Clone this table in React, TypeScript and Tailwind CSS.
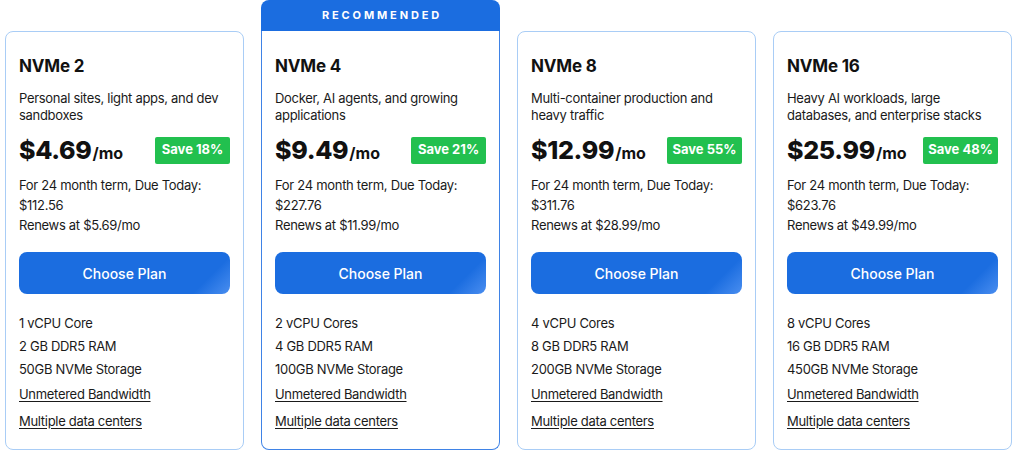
import React from 'react'

const plans = [
  {
    name: 'NVMe 2',
    desc: 'Personal sites, light apps, and dev sandboxes',
    price: '$4.69',
    save: 'Save 18%',
    due: '$112.56',
    renew: 'Renews at $5.69/mo',
    specs: ['1 vCPU Core', '2 GB DDR5 RAM', '50GB NVMe Storage'],
    recommended: false,
  },
  {
    name: 'NVMe 4',
    desc: 'Docker, AI agents, and growing applications',
    price: '$9.49',
    save: 'Save 21%',
    due: '$227.76',
    renew: 'Renews at $11.99/mo',
    specs: ['2 vCPU Cores', '4 GB DDR5 RAM', '100GB NVMe Storage'],
    recommended: true,
  },
  {
    name: 'NVMe 8',
    desc: 'Multi-container production and heavy traffic',
    price: '$12.99',
    save: 'Save 55%',
    due: '$311.76',
    renew: 'Renews at $28.99/mo',
    specs: ['4 vCPU Cores', '8 GB DDR5 RAM', '200GB NVMe Storage'],
    recommended: false,
  },
  {
    name: 'NVMe 16',
    desc: 'Heavy AI workloads, large databases, and enterprise stacks',
    price: '$25.99',
    save: 'Save 48%',
    due: '$623.76',
    renew: 'Renews at $49.99/mo',
    specs: ['8 vCPU Cores', '16 GB DDR5 RAM', '450GB NVMe Storage'],
    recommended: false,
  },
]

type Plan = (typeof plans)[number]

function PlanCard({ plan }: { plan: Plan }) {
  return (
    <div className="flex w-[239px] shrink-0 flex-col">
      {plan.recommended ? (
        <div className="flex h-[31px] items-center justify-center rounded-t-lg bg-[#1b6de0] pl-[3px] text-[11px] font-bold tracking-[0.26em] text-white">
          RECOMMENDED
        </div>
      ) : (
        <div className="h-[31px]" />
      )}
      <div
        className={
          plan.recommended
            ? 'flex flex-1 flex-col rounded-b-lg border border-t-0 border-[#3f83e6] bg-white px-[13px] pt-[21px]'
            : 'flex flex-1 flex-col rounded-lg border border-[#a9cdf6] bg-white px-[13px] pt-[20px]'
        }
      >
        <h2 className="text-[17px] leading-[28px] font-bold tracking-[-0.2px] text-[#111]">{plan.name}</h2>
        <p className="mt-[10px] text-[13px] leading-[17px] tracking-[-0.3px] text-[#1a1a1a]">{plan.desc}</p>

        {/* price row */}
        <div className="mt-[8px] flex items-center justify-between">
          <div className="flex items-baseline">
            <span className="text-[25px] leading-[36px] font-extrabold tracking-[-0.3px] text-[#111]">{plan.price}</span>
            <span className="ml-[1px] text-[16px] font-bold text-[#111]">/mo</span>
          </div>
          <span className="flex h-[27px] w-[75px] items-center justify-center rounded-[2px] bg-[#22c04f] text-[13px] font-bold text-white">
            {plan.save}
          </span>
        </div>

        <div className="mt-[7px] text-[13px] leading-[20px] tracking-[-0.3px] text-[#1a1a1a]">
          <p>For 24 month term, Due Today:</p>
          <p>{plan.due}</p>
          <p>{plan.renew}</p>
        </div>

        <button className="mt-[17px] h-[42px] w-full rounded-lg bg-[linear-gradient(135deg,#1b6de0_0%,#1b6de0_85%,#4a8ef0_100%)] text-[14px] font-medium text-white">
          Choose Plan
        </button>

        <ul className="mt-[18px] text-[13px] leading-[23px] tracking-[-0.3px] text-[#1a1a1a]">
          {plan.specs.map((s) => (
            <li key={s}>{s}</li>
          ))}
          <li className="mt-[2px] underline underline-offset-2">Unmetered Bandwidth</li>
          <li className="mt-[4px] underline underline-offset-2">Multiple data centers</li>
        </ul>
      </div>
    </div>
  )
}

export default function App() {
  return (
    <div
      className="flex h-[454px] w-[1024px] gap-[17px] bg-white px-[5px] pb-[4px]"
      style={{ fontFamily: '"Inter", "Noto Sans", sans-serif' }}
    >
      {plans.map((p) => (
        <PlanCard key={p.name} plan={p} />
      ))}
    </div>
  )
}
